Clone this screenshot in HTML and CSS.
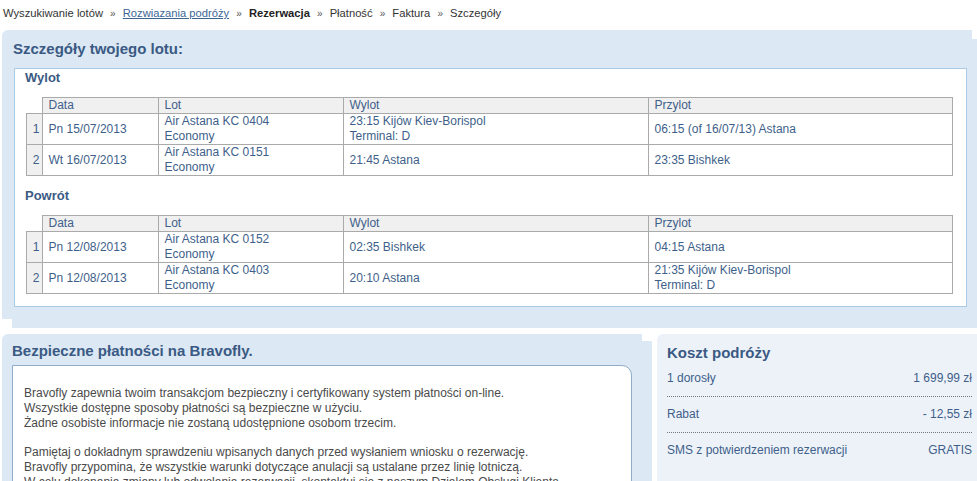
FILE: index.html
```html
<!DOCTYPE html>
<html lang="pl">
<head>
  <meta charset="UTF-8" />
  <meta name="viewport" content="width=device-width, initial-scale=1.0" />
  <title>Bravofly - Rezerwacja</title>
  <link rel="stylesheet" href="styles.css">
</head>
<body>
  <div class="breadcrumb">
    <span>Wyszukiwanie lotów</span>
    <span class="sep">»</span>
    <a href="#">Rozwiazania podróży</a>
    <span class="sep">»</span>
    <span class="current">Rezerwacja</span>
    <span class="sep">»</span>
    <span>Płatność</span>
    <span class="sep">»</span>
    <span>Faktura</span>
    <span class="sep">»</span>
    <span>Szczegóły</span>
  </div>

  <div class="panel details">
    <h2>Szczegóły twojego lotu:</h2>
    <div class="inner">
      <h3>Wylot</h3>
      <table class="flights">
        <thead>
          <tr>
            <th class="num"></th>
            <th class="c-date">Data</th>
            <th class="c-lot">Lot</th>
            <th class="c-dep">Wylot</th>
            <th>Przylot</th>
          </tr>
        </thead>
        <tbody>
          <tr>
            <td class="num">1</td>
            <td>Pn 15/07/2013</td>
            <td>Air Astana KC 0404<br>Economy</td>
            <td>23:15 Kijów Kiev-Borispol<br>Terminal: D</td>
            <td>06:15 (of 16/07/13) Astana</td>
          </tr>
          <tr>
            <td class="num">2</td>
            <td>Wt 16/07/2013</td>
            <td>Air Astana KC 0151<br>Economy</td>
            <td>21:45 Astana</td>
            <td>23:35 Bishkek</td>
          </tr>
        </tbody>
      </table>

      <h3 class="return">Powrót</h3>
      <table class="flights">
        <thead>
          <tr>
            <th class="num"></th>
            <th class="c-date">Data</th>
            <th class="c-lot">Lot</th>
            <th class="c-dep">Wylot</th>
            <th>Przylot</th>
          </tr>
        </thead>
        <tbody>
          <tr>
            <td class="num">1</td>
            <td>Pn 12/08/2013</td>
            <td>Air Astana KC 0152<br>Economy</td>
            <td>02:35 Bishkek</td>
            <td>04:15 Astana</td>
          </tr>
          <tr>
            <td class="num">2</td>
            <td>Pn 12/08/2013</td>
            <td>Air Astana KC 0403<br>Economy</td>
            <td>20:10 Astana</td>
            <td>21:35 Kijów Kiev-Borispol<br>Terminal: D</td>
          </tr>
        </tbody>
      </table>
    </div>
  </div>

  <div class="bottom">
    <div class="panel secure">
      <h2>Bezpieczne płatności na Bravofly.</h2>
      <div class="inner">
        <p>Bravofly zapewnia twoim transakcjom bezpieczny i certyfikowany system płatności on-line.<br>
        Wszystkie dostępne sposoby płatności są bezpieczne w użyciu.<br>
        Żadne osobiste informacje nie zostaną udostępnione osobom trzecim.</p>
        <p>Pamiętaj o dokładnym sprawdzeniu wpisanych danych przed wysłaniem wniosku o rezerwację.<br>
        Bravofly przypomina, że wszystkie warunki dotyczące anulacji są ustalane przez linię lotniczą.<br>
        W celu dokonania zmiany lub odwołania rezerwacji, skontaktuj się z naszym Działem Obsługi Klienta.</p>
      </div>
    </div>

    <div class="cost">
      <h2>Koszt podróży</h2>
      <div class="cost-row">
        <span>1 dorosły</span>
        <span>1 699,99 zł</span>
      </div>
      <div class="cost-row">
        <span>Rabat</span>
        <span>- 12,55 zł</span>
      </div>
      <div class="cost-row last">
        <span>SMS z potwierdzeniem rezerwacji</span>
        <span>GRATIS</span>
      </div>
    </div>
  </div>
</body>
</html>
```

FILE: styles.css
```css
body {
  margin: 0;
  font-family: "Liberation Sans", Arial, sans-serif;
  font-size: 12px;
  color: #333;
  background-color: #fff;
}

.breadcrumb {
  padding: 6px 3px 9px;
  font-size: 11.2px;
  line-height: 15px;
  color: #333;
}

.breadcrumb a {
  color: #3b6694;
  text-decoration: underline;
}

.breadcrumb .sep {
  margin: 0 4px;
  font-size: 10px;
  color: #555;
}

.breadcrumb .current {
  font-weight: bold;
  color: #222;
}

h2 {
  margin: 0;
  font-size: 15px;
  line-height: 18px;
  font-weight: bold;
  color: #3a5a84;
}

h3 {
  margin: 0 0 10px;
  font-size: 13px;
  line-height: 18px;
  font-weight: bold;
  color: #3a5a84;
}

.panel {
  background-color: #dce8f3;
  border-radius: 6px 0 0 0;
  box-shadow: 10px 9px 0 #dce8f3;
}

/* flight details */
.details {
  width: 970px;
  margin-left: 2px;
  padding: 10px 0 12px;
  box-sizing: border-box;
}

.details h2 {
  padding-left: 11px;
  margin-bottom: 10px;
}

.details .inner {
  margin: 0 5px 0 12px;
  padding: 0 13px 12px 10px;
  background-color: #fff;
  border: 1px solid #a9cbe6;
}

.details h3.return {
  margin-top: 11px;
}

table.flights {
  width: 927px;
  margin-left: 1px;
  border-collapse: collapse;
  table-layout: fixed;
  color: #3e5f8a;
}

table.flights th,
table.flights td {
  border: 1px solid #aaa;
  padding: 0 6px;
  line-height: 15px;
  text-align: left;
  vertical-align: middle;
  font-weight: normal;
}

table.flights th {
  background-color: #f0f0f0;
}

table.flights th.num {
  width: 15px;
  padding: 0;
  border: none;
  background-color: #fff;
}

table.flights td.num {
  padding: 0 2px 0 0;
  text-align: right;
  background-color: #f0f0f0;
}

table.flights td {
  height: 30px;
}

table.flights .c-date {
  width: 103px;
}

table.flights .c-lot {
  width: 172px;
}

table.flights .c-dep {
  width: 292px;
}

/* bottom row */
.bottom {
  display: flex;
  align-items: flex-start;
  margin-top: 15px;
}

.secure {
  width: 640px;
  margin-left: 2px;
  padding: 8px 10px 0;
  box-sizing: border-box;
  box-shadow: 10px 7px 0 #dce8f3;
}

.secure h2 {
  margin-bottom: 5px;
}

.secure .inner {
  padding: 20px 11px 10px;
  background-color: #fff;
  border: 1px solid #8fadc9;
  border-radius: 0 10px 0 0;
  color: #4a4a4a;
}

.secure p {
  margin: 0 0 14px;
  line-height: 15px;
}

.cost {
  width: 320px;
  margin-left: 15px;
  padding: 11px 5px 30px 10px;
  box-sizing: border-box;
  background-color: #edf2f9;
  border-radius: 6px 0 0 0;
}

.cost h2 {
  line-height: 16px;
}

.cost-row {
  display: flex;
  justify-content: space-between;
  padding: 10px 0;
  line-height: 15px;
  color: #3e5f8a;
  border-bottom: 1px dotted #777;
}

.cost-row.last {
  border-bottom: none;
}
```
